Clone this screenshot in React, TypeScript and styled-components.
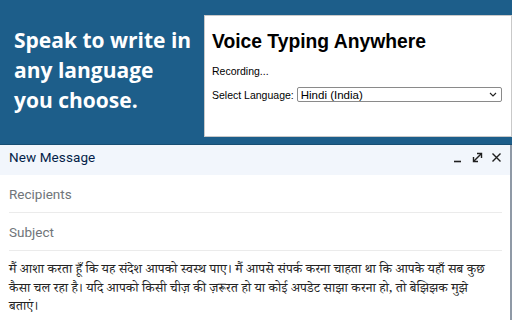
import React from "react";
import styled, { createGlobalStyle } from "styled-components";

const Global = createGlobalStyle`
  html, body { margin: 0; padding: 0; }
  body { width: 512px; height: 320px; overflow: hidden; background: #ffffff; }
`;

const Page = styled.div`
  width: 512px;
  height: 320px;
  display: flex;
  flex-direction: column;
  overflow: hidden;
`;

const Banner = styled.div`
  height: 145px;
  flex: none;
  background: #1d5e8a;
  display: flex;
  align-items: flex-start;
  border-bottom: 1px solid #174e73;
  box-sizing: border-box;
`;

const Tagline = styled.h1`
  margin: 0;
  width: 204px;
  flex: none;
  box-sizing: border-box;
  padding: 25px 0 0 14px;
  font-family: "Open Sans", Lato, sans-serif;
  font-weight: 700;
  font-size: 21px;
  line-height: 30px;
  color: #ffffff;
  letter-spacing: 0;
`;

const Popup = styled.div`
  margin-top: 15px;
  flex: 1;
  height: 122px;
  background: #ffffff;
  border: 1px solid #c9c9c9;
  box-sizing: border-box;
  padding: 14px 0 0 7px;
  font-family: "Liberation Sans", Arial, sans-serif;
  color: #000;
`;

const PopupTitle = styled.div`
  font-weight: 700;
  font-size: 19.3px;
  line-height: 24px;
`;

const Status = styled.div`
  margin-top: 11px;
  font-size: 10.5px;
  line-height: 12px;
`;

const LangRow = styled.div`
  margin-top: 10px;
  display: flex;
  align-items: center;
  gap: 3px;
  font-size: 10.5px;
`;

const SelectBox = styled.div`
  width: 205px;
  height: 15px;
  box-sizing: border-box;
  border: 1px solid #8a8a8a;
  border-radius: 2px;
  display: flex;
  align-items: center;
  justify-content: space-between;
  padding: 0 4px 0 3px;
  font-size: 11.5px;
`;

const Compose = styled.div`
  flex: 1;
  display: flex;
  flex-direction: column;
  background: #ffffff;
  border-right: 2px solid #8f99a6;
  box-sizing: border-box;
  font-family: Roboto, "Noto Sans", sans-serif;
`;

const ComposeHeader = styled.div`
  height: 30px;
  flex: none;
  box-sizing: border-box;
  background: #f2f6fc;
  display: flex;
  align-items: flex-start;
  justify-content: space-between;
  padding: 3px 7px 0 9px;
`;

const HeaderTitle = styled.span`
  font-size: 13.5px;
  line-height: 18px;
  color: #041e49;
  letter-spacing: 0.1px;
`;

const Icons = styled.div`
  display: flex;
  align-items: center;
  gap: 6px;
  padding-top: 3px;
`;

const IconBtn = styled.span`
  width: 13px;
  height: 13px;
  display: inline-flex;
  color: #1f1f1f;
`;

const Field = styled.div`
  height: 37px;
  flex: none;
  margin: 0 8px 0 9px;
  border-bottom: 1px solid #ebebeb;
  display: flex;
  align-items: center;
  font-size: 13.5px;
  color: #70757a;
`;

const Body = styled.div`
  padding: 11px 9px 0 9px;
  font-family: "Noto Serif Devanagari", "Lohit Devanagari", "FreeSerif", serif;
  font-size: 13.3px;
  line-height: 18.5px;
  color: #222;
  white-space: nowrap;
`;

export default function App() {
  return (
    <Page>
      <Global />
      <Banner>
        <Tagline>
          Speak to write in
          <br />
          any language
          <br />
          you choose.
        </Tagline>
        <Popup>
          <PopupTitle>Voice Typing Anywhere</PopupTitle>
          <Status>Recording...</Status>
          <LangRow>
            <span>Select Language:</span>
            <SelectBox>
              <span>Hindi (India)</span>
              <svg width="8" height="5" viewBox="0 0 8 5">
                <path d="M1 1 L4 4 L7 1" fill="none" stroke="#222" strokeWidth="1.1" />
              </svg>
            </SelectBox>
          </LangRow>
        </Popup>
      </Banner>
      <Compose>
        <ComposeHeader>
          <HeaderTitle>New Message</HeaderTitle>
          <Icons>
            <IconBtn>
              <svg width="13" height="13" viewBox="0 0 13 13">
                <path d="M2 10.5 H9" stroke="#1f1f1f" strokeWidth="1.6" />
              </svg>
            </IconBtn>
            <IconBtn>
              <svg width="13" height="13" viewBox="0 0 13 13">
                <path d="M3 10 L10 3" stroke="#1f1f1f" strokeWidth="1.4" fill="none" />
                <path d="M6 2.5 H10.5 V7" stroke="#1f1f1f" strokeWidth="1.4" fill="none" />
                <path d="M2.5 6 V10.5 H7" stroke="#1f1f1f" strokeWidth="1.4" fill="none" />
              </svg>
            </IconBtn>
            <IconBtn>
              <svg width="13" height="13" viewBox="0 0 13 13">
                <path d="M2.5 2.5 L10.5 10.5 M10.5 2.5 L2.5 10.5" stroke="#1f1f1f" strokeWidth="1.4" />
              </svg>
            </IconBtn>
          </Icons>
        </ComposeHeader>
        <Field>Recipients</Field>
        <Field>Subject</Field>
        <Body>
          मैं आशा करता हूँ कि यह संदेश आपको स्वस्थ पाए। मैं आपसे संपर्क करना चाहता था कि आपके यहाँ सब कुछ
          <br />
          कैसा चल रहा है। यदि आपको किसी चीज़ की ज़रूरत हो या कोई अपडेट साझा करना हो, तो बेझिझक मुझे
          <br />
          बताएं।
        </Body>
      </Compose>
    </Page>
  );
}
